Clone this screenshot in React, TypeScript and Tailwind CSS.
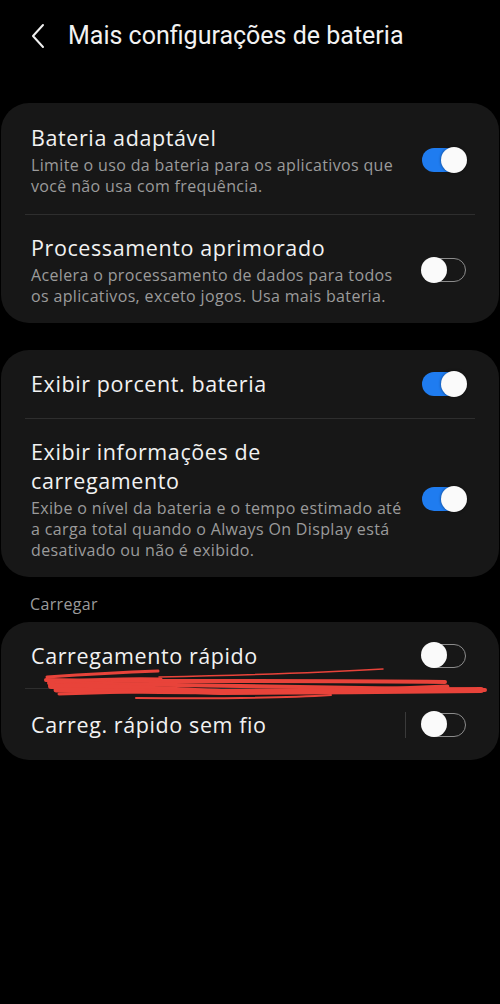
import React from "react";

function Toggle({ on }: { on: boolean }) {
  return on ? (
    <div className="relative w-[44px] h-[24px] rounded-full bg-[#1f7cf0]">
      <div className="absolute right-[-1px] top-[-1px] w-[26px] h-[26px] rounded-full bg-[#fafafa] shadow-[0_0_3px_rgba(0,0,0,0.5)]" />
    </div>
  ) : (
    <div className="relative w-[44px] h-[24px] rounded-full border-[1.5px] border-[#8c8c8c]">
      <div className="absolute left-[-2px] top-[-2.5px] w-[26px] h-[26px] rounded-full bg-[#fafafa]" />
    </div>
  );
}

function Row({
  title,
  sub,
  on,
  bar,
  className = "",
}: {
  title: React.ReactNode;
  sub?: React.ReactNode;
  on: boolean;
  bar?: boolean;
  className?: string;
}) {
  return (
    <div className={"flex items-center pl-[30px] pr-[33px] " + className}>
      <div className="flex-1 min-w-0">
        <div className="text-[21.5px] leading-[29px] tracking-[0.6px] text-[#f2f2f2] whitespace-nowrap">{title}</div>
        {sub && (
          <div className="text-[16px] leading-[21px] tracking-[0.35px] text-[#9b9b9b] mt-[3px] whitespace-nowrap">{sub}</div>
        )}
      </div>
      {bar && <div className="w-px h-[26px] bg-[#3a3a3a] mr-[14px]" />}
      <div className="pl-[2px]">
        <Toggle on={on} />
      </div>
    </div>
  );
}

function Divider() {
  return <div className="mx-[24px] h-px bg-[#2e2e2e]" />;
}

export default function App() {
  return (
    <div
      className="w-[500px] h-[1004px] bg-black overflow-hidden relative"
      style={{ fontFamily: "'Open Sans', 'Noto Sans', sans-serif" }}
    >
      <div className="flex items-center h-[72px] pl-[30px]">
        <svg width="16" height="26" viewBox="0 0 16 26" className="mr-[22px]">
          <path d="M13 2 L3 13 L13 24" fill="none" stroke="#f0f0f0" strokeWidth="2" strokeLinecap="round" strokeLinejoin="round" />
        </svg>
        <div className="text-[25px] text-[#f2f2f2]" style={{ fontFamily: "Roboto, sans-serif" }}>Mais configurações de bateria</div>
      </div>

      <div className="mt-[31px] mx-[1px] rounded-[28px] bg-[#171717]">
        <Row
          className="pt-[20px] pb-[17px]"
          title="Bateria adaptável"
          sub={<>Limite o uso da bateria para os aplicativos que<br />você não usa com frequência.</>}
          on
        />
        <Divider />
        <Row
          className="pt-[18px] pb-[16px]"
          title="Processamento aprimorado"
          sub={<>Acelera o processamento de dados para todos<br />os aplicativos, exceto jogos. Usa mais bateria.</>}
          on={false}
        />
      </div>

      <div className="mt-[27px] mx-[1px] rounded-[28px] bg-[#171717]">
        <Row className="pt-[19px] pb-[20px]" title="Exibir porcent. bateria" on />
        <Divider />
        <Row
          className="pt-[18px] pb-[16px]"
          title={<>Exibir informações de<br />carregamento</>}
          sub={<>Exibe o nível da bateria e o tempo estimado até<br />a carga total quando o Always On Display está<br />desativado ou não é exibido.</>}
          on
        />
      </div>

      <div className="pl-[30px] pt-[17px] pb-[7px] text-[16px] leading-[21px] tracking-[0.35px] text-[#9b9b9b]">Carregar</div>

      <div className="mx-[1px] rounded-[28px] bg-[#171717] relative">
        <Row className="pt-[19px] pb-[18px]" title="Carregamento rápido" on={false} />
        <Divider />
        <Row className="pt-[21px] pb-[21px]" title="Carreg. rápido sem fio" on={false} bar />
        <svg className="absolute left-0 top-0 pointer-events-none" width="500" height="140" viewBox="0 0 500 140">
          <g fill="none" stroke="#e8433a" strokeLinecap="round" strokeLinejoin="round">
            <path d="M46 55 C 90 52, 130 50, 157 49" strokeWidth="3" />
            <path d="M158 55 C 250 53, 330 50, 382 47" strokeWidth="1.5" />
            <path d="M45 58 C 150 60, 300 58, 444 60" strokeWidth="4" />
            <path d="M48 61 C 150 64, 300 64, 484 68" strokeWidth="4" />
            <path d="M50 64 C 120 64, 180 69, 220 70 C 300 70, 400 69, 480 68" strokeWidth="6" />
            <path d="M55 68 C 150 69, 260 73, 446 65" strokeWidth="5" />
            <path d="M58 72 C 100 71, 130 70, 160 69" strokeWidth="3" />
            <path d="M135 76 C 250 77, 300 75, 330 73" strokeWidth="2" />
            <path d="M55 60 C 100 57, 130 56, 160 57" strokeWidth="3" />
          </g>
        </svg>
      </div>
    </div>
  );
}
